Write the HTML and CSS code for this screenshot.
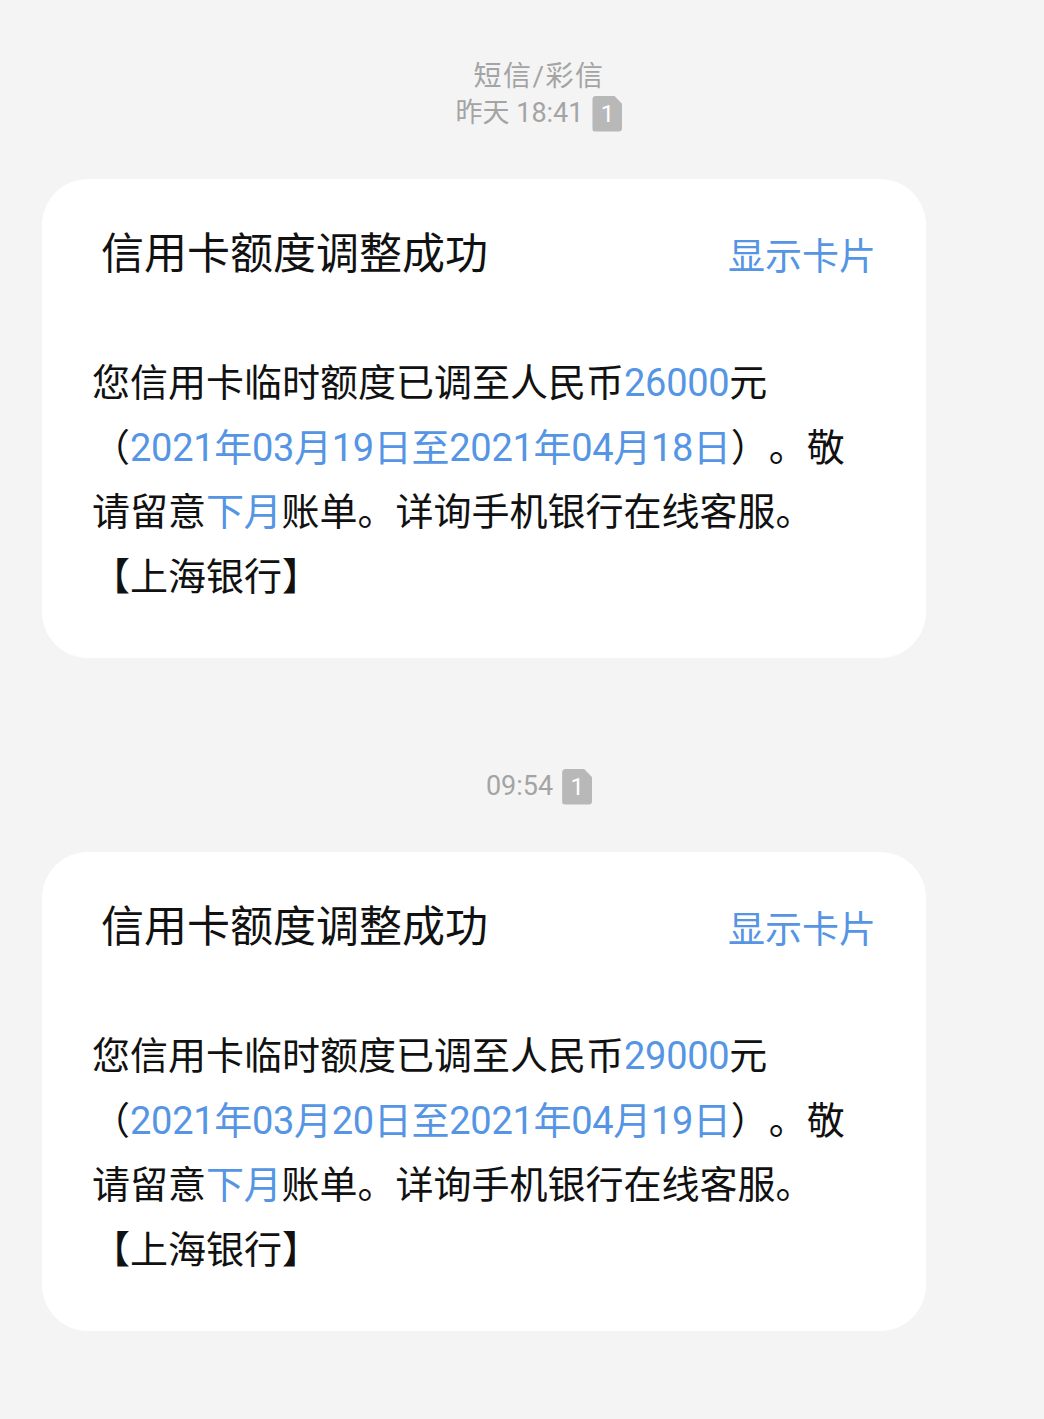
FILE: index.html
```html
<html lang="zh-CN">

<head>
    <meta charset="UTF-8">
    <meta name="viewport" content="width=device-width, initial-scale=1.0">
    <title>短信/彩信</title>

    <link rel="stylesheet" href="styles.css">
</head>

<body>

    <main class="thread">

        <div class="stamp">
            <div class="stamp-kind">短信/彩信</div>
            <div class="stamp-row">
                <span>昨天 18:41</span>
                <span class="sim">1</span>
            </div>
        </div>

        <section class="card">
            <div class="card-head">
                <h2 class="card-title">信用卡额度调整成功</h2>
                <a class="card-link">显示卡片</a>
            </div>
            <p class="card-text">您信用卡临时额度已调至人民币<span class="hl">26000</span>元<br>（<span class="hl">2021年03月19日至2021年04月18日</span>）。敬<br>请留意<span class="hl">下月</span>账单。详询手机银行在线客服。<br>【上海银行】</p>
        </section>

        <div class="stamp stamp-gap">
            <div class="stamp-row">
                <span>09:54</span>
                <span class="sim">1</span>
            </div>
        </div>

        <section class="card">
            <div class="card-head">
                <h2 class="card-title">信用卡额度调整成功</h2>
                <a class="card-link">显示卡片</a>
            </div>
            <p class="card-text">您信用卡临时额度已调至人民币<span class="hl">29000</span>元<br>（<span class="hl">2021年03月20日至2021年04月19日</span>）。敬<br>请留意<span class="hl">下月</span>账单。详询手机银行在线客服。<br>【上海银行】</p>
        </section>

    </main>

</body>

</html>
```

FILE: styles.css
```css
*,
*::after {
    box-sizing: border-box;
    margin: 0;
    padding: 0;
}

html,
body {
    height: 100%;
}

body {
    background-color: #f4f4f4;
    font-family: Roboto, "Noto Sans CJK SC", sans-serif;
    color: #111;
    text-spacing-trim: space-all;
}

.thread {
    padding: 58px 0 0 42px;
}

.stamp {
    display: flex;
    flex-direction: column;
    align-items: center;
    width: 994px;
    font-size: 27px;
    line-height: 37px;
    color: #a4a4a4;
    margin-bottom: 47px;
}

.stamp-kind {
    font-size: 28px;
    letter-spacing: 1.5px;
}

.stamp-gap {
    margin-top: 110px;
}

.stamp-row {
    display: flex;
    align-items: center;
    gap: 9px;
}

.sim {
    display: grid;
    place-items: center;
    width: 30px;
    height: 36px;
    border-radius: 4px;
    background-color: #b8b8b8;
    color: white;
    font-size: 24px;
    line-height: 1;
    clip-path: polygon(0 0, 72% 0, 100% 24%, 100% 100%, 0 100%);
}

.card {
    width: 884px;
    background-color: white;
    border-radius: 46px;
    padding: 40px 50px 49px 50px;
}

.card-head {
    display: flex;
    justify-content: space-between;
    align-items: center;
    height: 70px;
    padding-left: 9px;
    margin-bottom: 62px;
}

.card-title {
    font-size: 43px;
    font-weight: normal;
    line-height: 70px;
}

.card-link {
    font-size: 37px;
    color: #5595e4;
}

.card-text {
    font-size: 38px;
    line-height: 64.5px;
    white-space: nowrap;
}

.hl {
    color: #5595e4;
    letter-spacing: -0.3px;
}
```
